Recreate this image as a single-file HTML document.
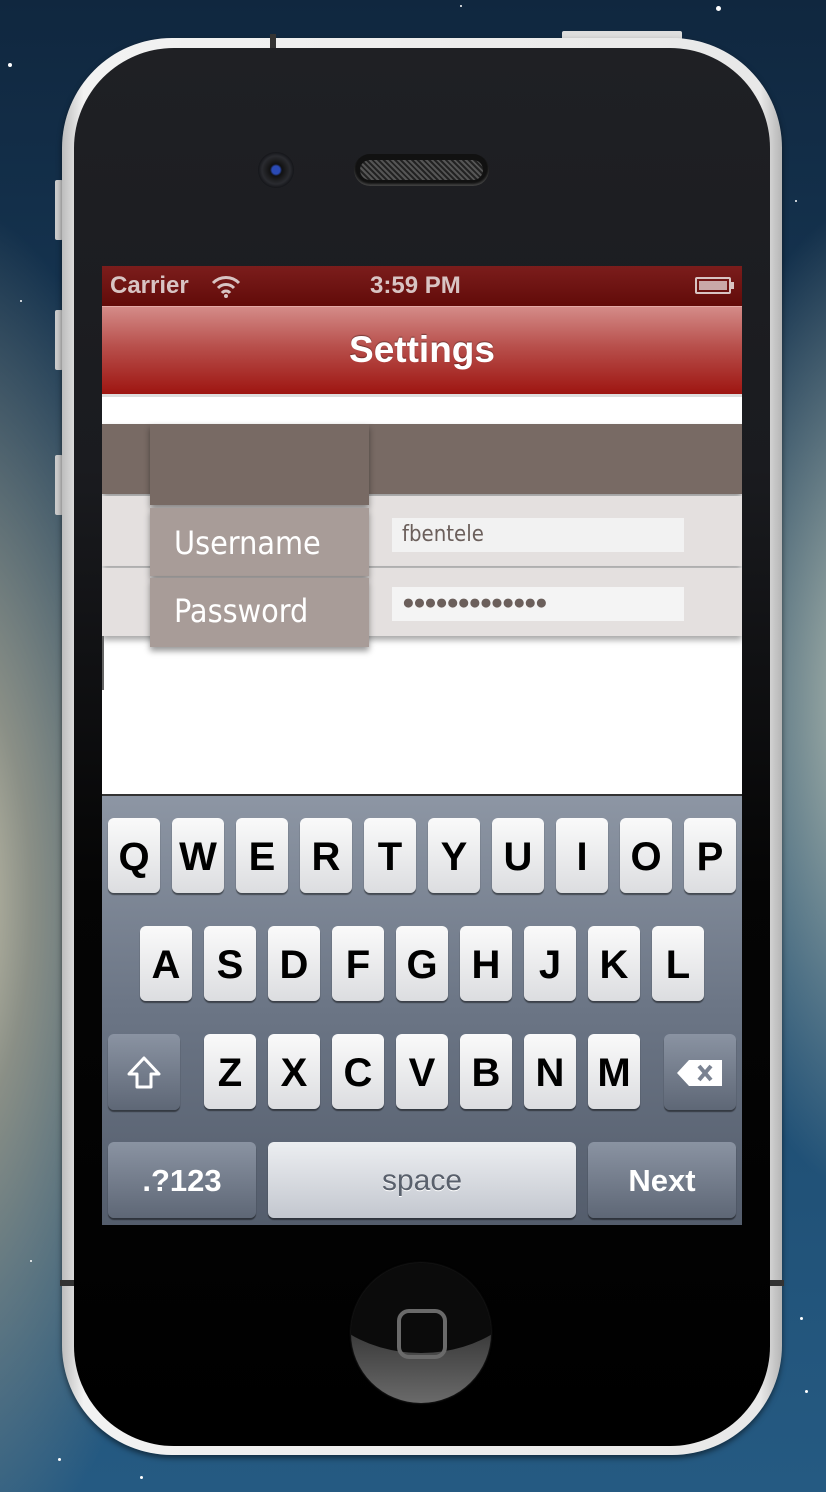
<!DOCTYPE html>
<html><head><meta charset="utf-8"><style>
*{margin:0;padding:0;box-sizing:border-box}
body{width:826px;height:1492px;position:relative;overflow:hidden;font-family:"Liberation Sans",sans-serif;
background:radial-gradient(ellipse 260px 700px at -60px 900px,#d9d2b8 0%,#8a8f86 35%,rgba(40,80,110,0) 100%),radial-gradient(ellipse 200px 500px at 880px 700px,#b9c2b4 0%,rgba(80,110,130,0) 100%),linear-gradient(#10273f,#1d4a6e 60%,#255a82);}
.a{position:absolute}
.star{position:absolute;background:#fff;border-radius:50%}
.k{position:absolute;width:52px;height:75px;border-radius:6px;background:linear-gradient(#fafafa,#dcdde0);box-shadow:0 2px 1px rgba(0,0,0,.45);font:bold 40px "Liberation Sans",sans-serif;color:#000;text-align:center;line-height:78px}
.d{position:absolute;height:76px;border-radius:6px;background:linear-gradient(#8a93a2,#5e6776);box-shadow:0 2px 1px rgba(0,0,0,.45);color:#fff;font:bold 31px "Liberation Sans",sans-serif;text-align:center;line-height:78px}
</style></head><body>
<div class="star" style="left:8px;top:63px;width:4px;height:4px"></div>
<div class="star" style="left:716px;top:6px;width:5px;height:5px"></div>
<div class="star" style="left:228px;top:40px;width:3px;height:3px"></div>
<div class="star" style="left:800px;top:1317px;width:3px;height:3px"></div>
<div class="star" style="left:58px;top:1458px;width:3px;height:3px"></div>
<div class="star" style="left:140px;top:1476px;width:3px;height:3px"></div>
<div class="star" style="left:805px;top:1390px;width:3px;height:3px"></div>
<div class="star" style="left:20px;top:300px;width:2px;height:2px"></div>
<div class="star" style="left:30px;top:1260px;width:2px;height:2px"></div>
<div class="star" style="left:795px;top:200px;width:2px;height:2px"></div>
<div class="star" style="left:460px;top:5px;width:2px;height:2px"></div>
<div class="a" style="left:55px;top:180px;width:8px;height:60px;background:#ccc;border-radius:2px"></div>
<div class="a" style="left:55px;top:310px;width:8px;height:60px;background:#ccc;border-radius:2px"></div>
<div class="a" style="left:55px;top:455px;width:8px;height:60px;background:#ccc;border-radius:2px"></div>
<div class="a" style="left:562px;top:31px;width:120px;height:9px;background:#ddd;border-radius:2px"></div>
<div class="a" style="left:62px;top:38px;width:720px;height:1417px;border-radius:110px;background:linear-gradient(90deg,#bdbdbd,#f2f2f2 3%,#e8e8e8 97%,#b5b5b5);box-shadow:0 3px 6px rgba(0,0,0,.5)"></div>
<div class="a" style="left:74px;top:48px;width:696px;height:1398px;border-radius:100px;background:linear-gradient(#1f2024,#1a1b1f 30%,#050505 60%,#000)"></div>
<div class="a" style="left:270px;top:34px;width:6px;height:14px;background:#333"></div>
<div class="a" style="left:258px;top:152px;width:36px;height:36px;border-radius:50%;background:radial-gradient(circle,#2a4ab5 0 4px,#111 6px,#2a2b30 14px,#141519 18px)"></div>
<div class="a" style="left:354px;top:154px;width:135px;height:32px;border-radius:16px;background:#111;box-shadow:inset 0 -2px 2px #444"></div>
<div class="a" style="left:360px;top:160px;width:123px;height:20px;border-radius:10px;background:repeating-linear-gradient(45deg,#555 0 2px,#222 2px 4px),#333"></div>
<div class="a" style="left:102px;top:266px;width:640px;height:959px;background:#fff;overflow:hidden">
 <div class="a" style="left:0;top:0;width:640px;height:40px;background:linear-gradient(#7b1d1c,#620b09);color:#d8c4c3;font:bold 24px 'Liberation Sans',sans-serif">
  <span class="a" style="left:8px;top:6px">Carrier</span>
  <svg class="a" style="left:108px;top:8px" width="32" height="24" viewBox="0 0 32 24"><path d="M3 9a18 18 0 0 1 26 0M8 14a11 11 0 0 1 16 0M12 19a5 5 0 0 1 8 0" fill="none" stroke="#d8c4c3" stroke-width="3"/><circle cx="16" cy="22" r="2" fill="#d8c4c3"/></svg>
  <span class="a" style="left:268px;top:6px">3:59 PM</span>
  <div class="a" style="left:593px;top:11px;width:36px;height:17px;border:2px solid #d8c4c3;border-radius:2px;padding:2px"><div style="width:100%;height:100%;background:#c9a9a8"></div></div>
  <div class="a" style="left:629px;top:16px;width:3px;height:7px;background:#d8c4c3"></div>
 </div>
 <div class="a" style="left:0;top:40px;width:640px;height:88px;background:linear-gradient(#d48b88,#b8504c 45%,#9e1511);border-top:1px solid #e4a9a6;color:#fff;font:bold 37px 'Liberation Sans',sans-serif;text-align:center;line-height:86px;text-shadow:0 -1px 1px rgba(0,0,0,.4)">Settings</div>
 <div class="a" style="left:0;top:128px;width:640px;height:3px;background:#ddd"></div>
 <div class="a" style="left:0;top:158px;width:640px;height:70px;background:#786a64;box-shadow:0 4px 6px rgba(0,0,0,.4)"></div>
 <div class="a" style="left:0;top:230px;width:640px;height:70px;background:#e4e0df;box-shadow:0 4px 6px rgba(0,0,0,.35)"></div>
 <div class="a" style="left:0;top:302px;width:640px;height:68px;background:#e4e0df;box-shadow:0 4px 6px rgba(0,0,0,.35)"></div>
 <div class="a" style="left:48px;top:158px;width:219px;height:81px;background:#786a64;box-shadow:0 4px 6px rgba(0,0,0,.4)"></div>
 <div class="a" style="left:48px;top:242px;width:219px;height:68px;background:#a89c98;box-shadow:0 4px 6px rgba(0,0,0,.4);color:#fff;font:32px 'DejaVu Sans Condensed','Liberation Sans',sans-serif;padding:16px 0 0 24px">Username</div>
 <div class="a" style="left:48px;top:312px;width:219px;height:69px;background:#a89c98;box-shadow:0 4px 6px rgba(0,0,0,.4);color:#fff;font:32px 'DejaVu Sans Condensed','Liberation Sans',sans-serif;padding:14px 0 0 24px">Password</div>
 <div class="a" style="left:290px;top:252px;width:292px;height:34px;background:#f2f2f2;color:#6b5f5b;font:22px 'DejaVu Sans Condensed','Liberation Sans',sans-serif;padding:4px 0 0 10px">fbentele</div>
 <div class="a" style="left:290px;top:321px;width:292px;height:34px;background:#f4f4f4;color:#6b5f5b;font:21px 'Liberation Sans',sans-serif;letter-spacing:-1.6px;padding:4px 0 0 10px">●●●●●●●●●●●●●</div>
 <div class="a" style="left:0;top:370px;width:2px;height:54px;background:#666"></div>
 <div class="a" style="left:0;top:528px;width:640px;height:431px;background:linear-gradient(#8d96a4,#6b7585 50%,#545d6c);border-top:2px solid #333"></div>
</div>
<div class="k" style="left:108px;top:818px">Q</div><div class="k" style="left:172px;top:818px">W</div><div class="k" style="left:236px;top:818px">E</div><div class="k" style="left:300px;top:818px">R</div><div class="k" style="left:364px;top:818px">T</div><div class="k" style="left:428px;top:818px">Y</div><div class="k" style="left:492px;top:818px">U</div><div class="k" style="left:556px;top:818px">I</div><div class="k" style="left:620px;top:818px">O</div><div class="k" style="left:684px;top:818px">P</div>
<div class="k" style="left:140px;top:926px">A</div><div class="k" style="left:204px;top:926px">S</div><div class="k" style="left:268px;top:926px">D</div><div class="k" style="left:332px;top:926px">F</div><div class="k" style="left:396px;top:926px">G</div><div class="k" style="left:460px;top:926px">H</div><div class="k" style="left:524px;top:926px">J</div><div class="k" style="left:588px;top:926px">K</div><div class="k" style="left:652px;top:926px">L</div>
<div class="d" style="left:108px;top:1034px;width:72px"><svg style="margin-top:22px" width="36" height="34" viewBox="0 0 36 34"><path d="M18 2 L33 18 H25 V31 H11 V18 H3 Z" fill="none" stroke="#fff" stroke-width="3" stroke-linejoin="round"/></svg></div>
<div class="k" style="left:204px;top:1034px">Z</div><div class="k" style="left:268px;top:1034px">X</div><div class="k" style="left:332px;top:1034px">C</div><div class="k" style="left:396px;top:1034px">V</div><div class="k" style="left:460px;top:1034px">B</div><div class="k" style="left:524px;top:1034px">N</div><div class="k" style="left:588px;top:1034px">M</div>
<div class="d" style="left:664px;top:1034px;width:72px"><svg style="margin-top:24px" width="50" height="30" viewBox="0 0 50 30"><path d="M14 2 H47 V28 H14 L2 15 Z" fill="#fff"/><path d="M24 8 L36 22 M36 8 L24 22" stroke="#7a8291" stroke-width="4"/></svg></div>
<div class="d" style="left:108px;top:1142px;width:148px">.?123</div>
<div class="k" style="left:268px;top:1142px;width:308px;height:76px;background:linear-gradient(#eceef1,#c3c7cf);color:#59606c;font-size:30px;font-weight:normal;text-shadow:0 1px 0 #fff">space</div>
<div class="d" style="left:588px;top:1142px;width:148px">Next</div>
<div class="a" style="left:351px;top:1263px;width:140px;height:140px;border-radius:50%;background:#0b0b0b;overflow:hidden;box-shadow:0 0 2px #333;z-index:0">
 <div class="a" style="left:0;top:70px;width:140px;height:70px;background:linear-gradient(#3a3a3a,#6a6a6a)"></div>
 <div class="a" style="left:-40px;top:-70px;width:220px;height:160px;border-radius:50%;background:#0b0b0b"></div>
</div>
<div class="a" style="left:397px;top:1309px;width:50px;height:50px;border:4px solid #6a6a6a;border-radius:12px;z-index:2"></div>
<div class="a" style="left:60px;top:1280px;width:14px;height:6px;background:#333"></div>
<div class="a" style="left:770px;top:1280px;width:14px;height:6px;background:#333"></div>
</body></html>
